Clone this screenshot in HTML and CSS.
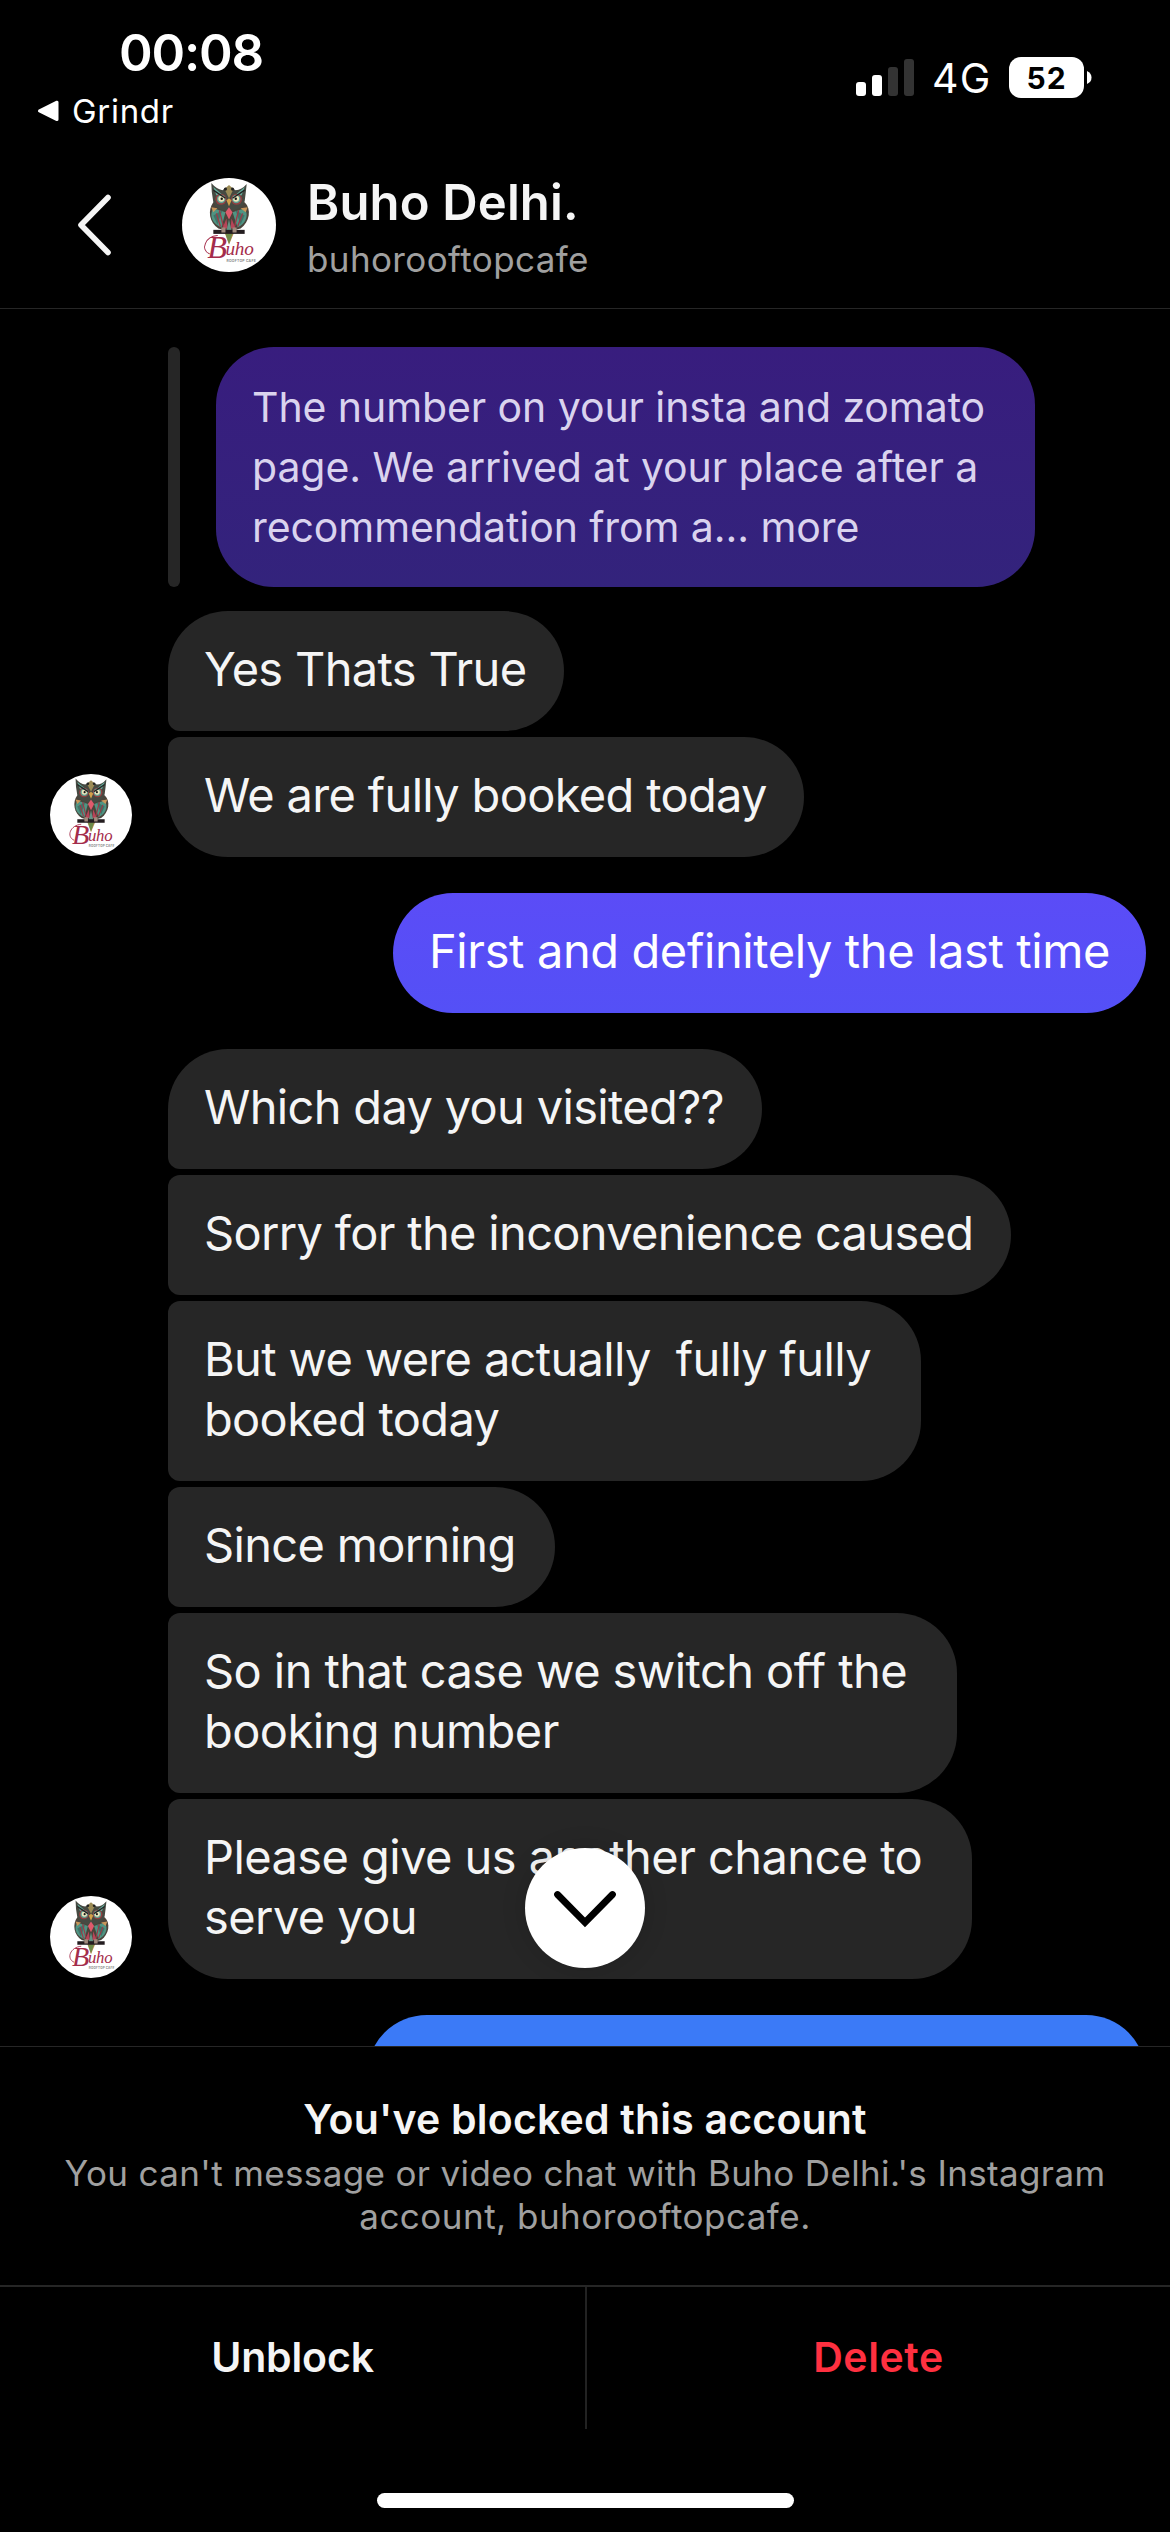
FILE: index.html
```html
<!DOCTYPE html>
<html lang="en">
<head>
<meta charset="utf-8">
<title>Buho Delhi.</title>
<link rel="stylesheet" href="styles.css">
</head>
<body>
<div class="screen">
  <div class="status">
    <div class="status-left">
      <div class="time">00:08</div>
      <div class="return">
        <svg width="23" height="22" viewBox="0 0 23 22"><path d="M2.5 10.8L20 2.2V19.6Z" fill="#fff" stroke="#fff" stroke-width="3" stroke-linejoin="round"/></svg>
        <span>Grindr</span>
      </div>
    </div>
    <div class="status-right">
      <svg class="signal" width="58" height="38" viewBox="0 0 58 38">
        <rect y="23" width="10" height="14" rx="3" fill="#fff"/>
        <rect x="16" y="16" width="10" height="21" rx="3" fill="#fff"/>
        <rect x="32" y="8" width="10" height="29" rx="3" fill="#333"/>
        <rect x="48" y="0" width="10" height="37" rx="3" fill="#333"/>
      </svg>
      <span class="network">4G</span>
      <div class="battery">52</div>
      <svg class="battery-cap" width="5" height="13" viewBox="0 0 5 13"><path d="M0 0Q4.5 2 4.5 6.5T0 13Z" fill="#fff"/></svg>
    </div>
  </div>

  <header class="header">
    <svg class="back" width="36" height="64" viewBox="0 0 36 64"><path d="M32 4.5L5 32L32 59.5" fill="none" stroke="#f5f5f5" stroke-width="5.6" stroke-linecap="round" stroke-linejoin="round"/></svg>
    <svg class="avatar-large" width="94" height="94" viewBox="0 0 93 93">
      <g id="owl">
        <circle cx="46.5" cy="46.5" r="46.5" fill="#fff"/>
        <path d="M40 48L46.5 66L54 48Z" fill="#b58a4c"/>
        <path d="M43 55L46.5 65L50 55Z" fill="#6d8b4a"/>
        <path d="M31 24C25 32 27 44 36 50L46.5 53L58 50C67 43 69 31 62 24Z" fill="#4a443b"/>
        <path d="M31 30C26 38 31 46 39 49L43 34ZM62 30C67 38 62 46 55 49L50 34Z" fill="#4f9483"/>
        <path d="M31 37L40 32L35 46ZM62 37L53 32L58 46Z" fill="#3f7468"/>
        <path d="M29 29L35 30L31 34ZM65 29L58 30L63 34Z" fill="#c9965a"/>
        <path d="M37 32L41 48M34 35L38 48M56 32L52 48M60 35L55 48" stroke="#9b3a48" stroke-width="1.3" fill="none"/>
        <path d="M29 5Q34 11 40 12Q46 6 53 12Q59 12 64 6Q63 16 62 23Q59 32 46.5 33Q34 32 31 24Q29 14 29 5Z" fill="#464a42"/>
        <path d="M31 9L44 20L34 17ZM62 9L49 20L59 17Z" fill="#62ae9d"/>
        <path d="M34 15L46 24L38 17ZM59 15L47 24L55 17Z" fill="#b6464a"/>
        <path d="M42 11L46.5 7L51 11L46.5 20Z" fill="#9b8b56"/>
        <circle cx="43" cy="11" r="1.5" fill="#222"/><circle cx="50" cy="11" r="1.5" fill="#222"/>
        <circle cx="38.5" cy="21" r="5.5" fill="#923f40"/><circle cx="54" cy="21" r="5.5" fill="#923f40"/>
        <circle cx="38.8" cy="20.7" r="4.2" fill="#5fa093"/><circle cx="53.7" cy="20.7" r="4.2" fill="#5fa093"/>
        <circle cx="39" cy="20.5" r="3" fill="#eee7bd"/><circle cx="53.5" cy="20.5" r="3" fill="#eee7bd"/>
        <circle cx="39.3" cy="20.6" r="1.2" fill="#181818"/><circle cx="53.2" cy="20.6" r="1.2" fill="#181818"/>
        <path d="M31 12L43 20M62 12L50 20" stroke="#222" stroke-width="1.4"/>
        <path d="M44 22L46.5 20L49 22L46.5 28Z" fill="#d2a04a"/>
        <path d="M46.5 29L50 34L46.5 41L43 34Z" fill="#df5a6c"/>
        <path d="M44 40L40 50H45ZM49 40L53 50H48Z" fill="#b74458"/>
        <path d="M46.5 41L44 52H49Z" fill="#639487"/>
        <rect x="31" y="51.3" width="31" height="4" fill="#241d20"/>
        <path d="M39 49H43V54H39ZM50 49H54V54H50Z" fill="#a18a7d"/>
        <path d="M27 75C18 71 23 58 35 57" stroke="#a42c4b" stroke-width="1" fill="none" stroke-linecap="round"/>
        <text x="25" y="79.5" class="logo-big">B</text>
        <text x="43" y="76" class="logo-name" textLength="28">uho</text>
        <text x="44" y="82.8" class="logo-tag" textLength="29">ROOFTOP CAFE</text>
      </g>
    </svg>
    <div class="who">
      <div class="name">Buho Delhi.</div>
      <div class="handle">buhorooftopcafe</div>
    </div>
  </header>

  <main class="chat">
    <div class="quote">
      <div class="quote-bar"></div>
      <div class="quote-bubble">The number on your insta and zomato<br>page. We arrived at your place after a<br>recommendation from a... more</div>
    </div>

    <div class="group">
      <svg class="avatar" width="82" height="82" viewBox="0 0 93 93"><use href="#owl"/></svg>
      <div class="stack">
        <div class="bubble w-yes">Yes Thats True</div>
        <div class="bubble w-full">We are fully booked today</div>
      </div>
    </div>

    <div class="bubble mine w-first">First and definitely the last time</div>

    <div class="group">
      <svg class="avatar" width="82" height="82" viewBox="0 0 93 93"><use href="#owl"/></svg>
      <div class="stack">
        <div class="bubble w-which">Which day you visited??</div>
        <div class="bubble w-sorry">Sorry for the inconvenience caused</div>
        <div class="bubble w-but">But we were actually&nbsp; fully fully<br>booked today</div>
        <div class="bubble w-since">Since morning</div>
        <div class="bubble w-so loose">So in that case we switch off the<br>booking number</div>
        <div class="bubble w-please loose">Please give us another chance to<br>serve you</div>
      </div>
    </div>

    <div class="bubble mine w-next"></div>

    <button class="scroll-down" aria-label="Scroll down">
      <svg width="68" height="42" viewBox="0 0 68 42"><path d="M6.5 6.5L34 34.5L61.5 6.5" fill="none" stroke="#000" stroke-width="6.8" stroke-linecap="round"/></svg>
    </button>
  </main>

  <footer class="blocked">
    <div class="blocked-title">You've blocked this account</div>
    <div class="blocked-text">You can't message or video chat with Buho Delhi.'s Instagram<br><span class="blocked-end">account, buhorooftopcafe.</span></div>
    <div class="actions">
      <div class="action unblock">Unblock</div>
      <div class="action delete">Delete</div>
    </div>
    <div class="home"></div>
  </footer>
</div>
</body>
</html>
```
FILE: styles.css
```css
* { box-sizing: border-box; }
body { margin: 0; background: #000; }
svg { display: block; flex: none; }

.screen {
  width: 1170px;
  height: 2532px;
  display: flex;
  flex-direction: column;
  background: #000;
  color: #f5f5f5;
  font-family: Inter, "Liberation Sans", sans-serif;
  overflow: hidden;
}

/* Status bar */
.status {
  height: 150px;
  display: flex;
  justify-content: space-between;
  color: #fff;
}
.status-left { padding: 23px 0 0 37px; }
.time {
  padding-left: 82px;
  font-size: 51px;
  line-height: 60px;
  font-weight: 600;
  letter-spacing: -1.2px;
}
.return {
  margin-top: 8px;
  display: flex;
  align-items: center;
  gap: 12px;
  font-size: 33px;
  line-height: 40px;
  letter-spacing: 0.7px;
}
.status-right {
  height: 41px;
  margin: 57px 78px 0 0;
  display: flex;
  align-items: center;
}
.network {
  margin-left: 18px;
  width: 77px;
  font-size: 41px;
  line-height: 44px;
  letter-spacing: 1.2px;
}
.battery {
  width: 75px;
  height: 41px;
  border-radius: 12px;
  background: #fff;
  color: #000;
  font-size: 30px;
  line-height: 42px;
  font-weight: 700;
  letter-spacing: 1px;
  text-align: center;
}
.battery-cap { margin-left: 3px; }

/* Conversation header */
.header {
  height: 159px;
  border-bottom: 1px solid #262626;
  display: flex;
  align-items: flex-start;
}
.back { margin: 43px 0 0 76px; }
.avatar-large { margin: 28px 0 0 70px; }
.who { margin: 23px 0 0 31px; }
.name {
  font-size: 49px;
  line-height: 60px;
  font-weight: 600;
  letter-spacing: 0.15px;
}
.handle {
  margin-top: 6px;
  color: #a0a0a0;
  font-size: 35px;
  line-height: 40px;
  letter-spacing: 0.39px;
}

/* Messages */
.chat {
  position: relative;
  height: 1737px;
  padding: 38px 24px 0 50px;
  display: flex;
  flex-direction: column;
  gap: 36px;
  overflow: hidden;
}
.quote {
  flex: none;
  margin: 0 0 -12px 118px;
  display: flex;
  gap: 36px;
}
.quote-bar {
  width: 12px;
  border-radius: 6px;
  background: #262626;
}
.quote-bubble {
  width: 819px;
  padding: 30px 36px;
  border-radius: 58px;
  background: linear-gradient(#381d7e, #33237c);
  color: #dad3ee;
  font-size: 41px;
  line-height: 60px;
  letter-spacing: -0.08px;
  white-space: nowrap;
}
.group {
  flex: none;
  display: flex;
  align-items: flex-end;
  gap: 36px;
}
.avatar { margin-bottom: 1px; }
.stack {
  display: flex;
  flex-direction: column;
  gap: 6px;
}
.bubble {
  flex: none;
  min-height: 120px;
  padding: 28px 0 32px 36px;
  border-radius: 12px 60px 60px 12px;
  background: #262626;
  font-size: 47px;
  line-height: 60px;
  letter-spacing: -0.67px;
  white-space: nowrap;
}
.stack .bubble:first-child { border-top-left-radius: 60px; }
.stack .bubble:last-child { border-bottom-left-radius: 60px; }
.loose { letter-spacing: -0.57px; }
.mine {
  align-self: flex-end;
  border-radius: 60px;
  color: #fff;
}
.w-yes { width: 396px; }
.w-full { width: 636px; }
.w-first {
  width: 753px;
  letter-spacing: -0.39px;
  background: linear-gradient(#5b4cf7, #5450f6);
}
.w-which { width: 594px; }
.w-sorry { width: 843px; }
.w-but { width: 753px; }
.w-since { width: 387px; }
.w-so { width: 789px; }
.w-please { width: 804px; }
.w-next { width: 779px; background: #3b7af7; }

.scroll-down {
  position: absolute;
  left: 525px;
  top: 1539px;
  width: 120px;
  height: 120px;
  padding: 2px 0 0;
  border: 0;
  border-radius: 50%;
  display: flex;
  align-items: center;
  justify-content: center;
  background: #fff;
  box-shadow: 0 0 24px rgba(0, 0, 0, 0.15);
}

/* Blocked notice */
.blocked {
  flex: 1;
  padding-top: 47px;
  border-top: 1px solid #262626;
  text-align: center;
}
.blocked-title {
  font-size: 41px;
  line-height: 50px;
  font-weight: 600;
  letter-spacing: 0.19px;
}
.blocked-text {
  margin-top: 8px;
  padding-bottom: 47px;
  color: #a0a0a0;
  font-size: 35px;
  line-height: 43px;
  letter-spacing: 0.36px;
}
.blocked-end { letter-spacing: 0.48px; }
.actions {
  height: 144px;
  display: grid;
  grid-template-columns: 1fr 1fr;
  border-top: 2px solid #262626;
}
.action {
  padding-top: 45px;
  font-size: 41px;
  line-height: 50px;
  font-weight: 600;
}
.unblock { letter-spacing: -0.15px; }
.delete {
  border-left: 2px solid #222;
  color: #ff3040;
  letter-spacing: 0.6px;
}
.home {
  width: 417px;
  height: 15px;
  margin: 64px auto 0;
  border-radius: 8px;
  background: #fff;
}

/* Profile picture lettering */
.logo-big { font: italic 32px "Liberation Serif", serif; fill: #a42c4b; }
.logo-name { font: italic 19px "Liberation Serif", serif; fill: #a42c4b; }
.logo-tag { font: 700 3.4px Inter, sans-serif; fill: #8a8a8a; }
```
